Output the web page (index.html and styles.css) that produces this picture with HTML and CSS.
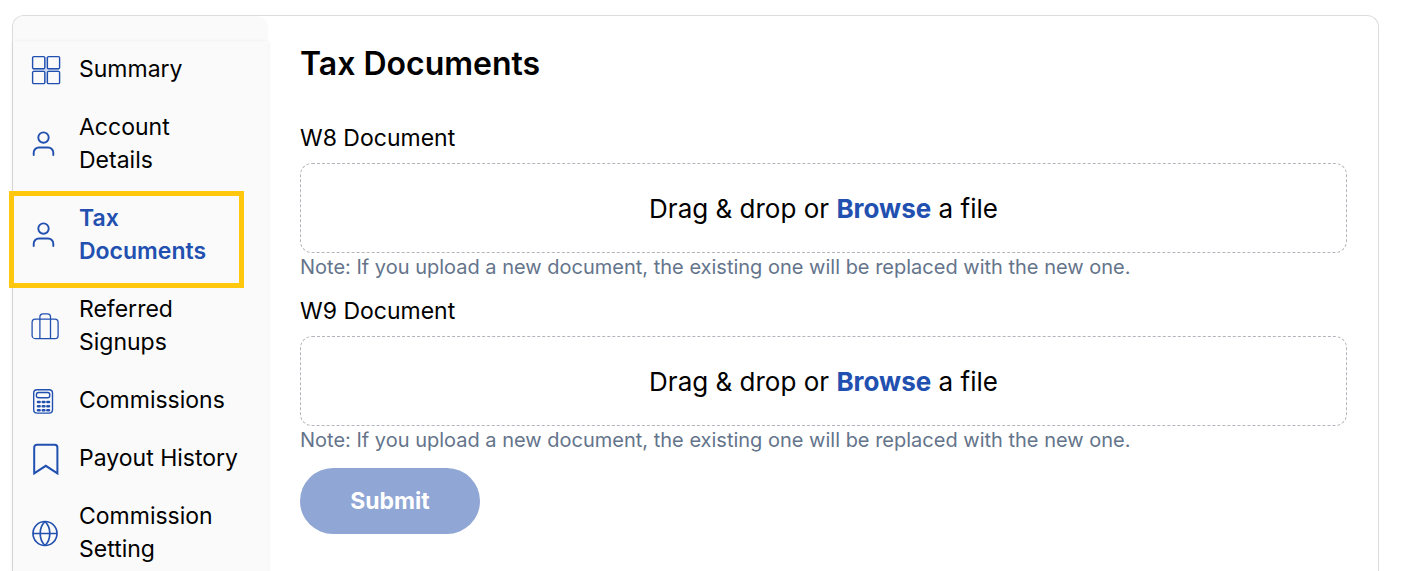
FILE: index.html
```html
<!DOCTYPE html>
<html lang="en">
<head>
<meta charset="utf-8">
<title>Tax Documents</title>
<link rel="stylesheet" href="styles.css">
</head>
<body>
<div class="card">
  <nav class="sidebar" aria-label="Account">
    <div class="menu">
      <a class="item" href="#">
        <svg class="icon" width="30" height="30" viewBox="0 0 30 30"><path d="M2 15.1h26M15.1 2v26" stroke="#cfd9ee" stroke-width="2"/><g fill="#fafafa" stroke="currentColor" stroke-width="1.4"><rect x="1.6" y="1.6" width="12.2" height="12.2" rx="1.2"/><rect x="16.4" y="1.6" width="12.2" height="12.2" rx="1.2"/><rect x="1.6" y="16.4" width="12.2" height="12.2" rx="1.2"/><rect x="16.4" y="16.4" width="12.2" height="12.2" rx="1.2"/></g></svg>
        <span>Summary</span>
      </a>
      <a class="item" href="#">
        <svg class="icon" width="30" height="30" viewBox="0 0 30 30"><g fill="none" stroke="currentColor" stroke-width="1.9" stroke-linecap="round"><circle cx="12.5" cy="8.6" r="5.2"/><path d="M2.7 26v-2.3a5.2 5.2 0 0 1 5.2-5.2h9.2a5.2 5.2 0 0 1 5.2 5.2V26"/></g></svg>
        <span>Account<br>Details</span>
      </a>
      <a class="item item-active" href="#" aria-current="page">
        <svg class="icon" width="30" height="30" viewBox="0 0 30 30"><g fill="none" stroke="currentColor" stroke-width="1.9" stroke-linecap="round"><circle cx="12.5" cy="8.6" r="5.2"/><path d="M2.7 26v-2.3a5.2 5.2 0 0 1 5.2-5.2h9.2a5.2 5.2 0 0 1 5.2 5.2V26"/></g></svg>
        <span>Tax<br>Documents</span>
      </a>
      <a class="item" href="#">
        <svg class="icon" width="30" height="30" viewBox="0 0 30 30"><g fill="none" stroke="currentColor" stroke-width="1.3"><rect x="1.1" y="8.2" width="26" height="19.4" rx="3.2"/><path d="M8.9 27.6V5.8a3 3 0 0 1 3-3h4.6a3 3 0 0 1 3 3v21.8"/></g></svg>
        <span>Referred<br>Signups</span>
      </a>
      <a class="item" href="#">
        <svg class="icon" width="30" height="30" viewBox="0 0 30 30"><g fill="none" stroke="currentColor" stroke-width="1.4"><rect x="2.7" y="3.7" width="18.8" height="23.4" rx="3.4"/><rect x="5.4" y="6.5" width="13.4" height="5.2" rx="2.2"/></g><path d="M7 16h1.6M11.8 16h1.6M16.4 16H18M7 20.2h1.6M11.8 20.2h1.6M16.4 20.2H18M7 24.2h1.6M11.8 24.2h1.6M16.4 24.2H18" fill="none" stroke="currentColor" stroke-width="2.6" stroke-linecap="round"/></svg>
        <span>Commissions</span>
      </a>
      <a class="item" href="#">
        <svg class="icon" width="30" height="32" viewBox="0 0 30 32"><path d="M3.2 30.4V4.4a2.6 2.6 0 0 1 2.6-2.6h18a2.6 2.6 0 0 1 2.6 2.6v26L14.8 22.8Z" fill="none" stroke="currentColor" stroke-width="2"/></svg>
        <span>Payout History</span>
      </a>
      <a class="item" href="#">
        <svg class="icon" width="30" height="30" viewBox="0 0 30 30"><g fill="none" stroke="currentColor" stroke-width="1.7"><circle cx="14" cy="15.5" r="12"/><path d="M2 15.5h24M14 3.5c-6.4 6.2-6.4 17.8 0 24M14 3.5c6.4 6.2 6.4 17.8 0 24"/></g></svg>
        <span>Commission<br>Setting</span>
      </a>
    </div>
  </nav>
  <main class="content">
    <h1 class="title">Tax Documents</h1>
    <form>
      <div class="field">
        <div class="label" id="w8">W8 Document</div>
        <div class="drop" role="group" aria-labelledby="w8">Drag &amp; drop or&nbsp;<button class="browse" type="button">Browse</button>&nbsp;a file</div>
        <p class="note">Note: If you upload a new document, the existing one will be replaced with the new one.</p>
      </div>
      <div class="field">
        <div class="label" id="w9">W9 Document</div>
        <div class="drop" role="group" aria-labelledby="w9">Drag &amp; drop or&nbsp;<button class="browse" type="button">Browse</button>&nbsp;a file</div>
        <p class="note">Note: If you upload a new document, the existing one will be replaced with the new one.</p>
      </div>
      <button class="submit" type="submit" disabled>Submit</button>
    </form>
  </main>
</div>
</body>
</html>
```
FILE: styles.css
```css
* { box-sizing: border-box; }
html, body { height: 100%; }
body {
  margin: 0;
  padding: 15px 24px 0 12px;
  overflow: hidden;
  background: #fff;
  color: #000;
  font-family: Inter, "Open Sans", sans-serif;
  font-size: 23px;
  line-height: 33px;
}
.card {
  display: flex;
  min-height: 100%;
  border: 1px solid #dcdcdc;
  border-bottom: 0;
  border-radius: 12px 12px 0 0;
}
.sidebar {
  flex: none;
  width: 255px;
  padding-top: 25px;
  background: #fafafa;
  border-radius: 12px 12px 0 0;
}
.menu {
  display: flex;
  flex-direction: column;
  gap: 25px;
  height: 100%;
  padding: 12px 24px 0 18px;
  background: #fafafa;
  box-shadow: 0 1px 4px rgba(0, 0, 0, 0.09);
}
.item {
  position: relative;
  display: flex;
  align-items: center;
  gap: 18px;
  color: #000;
  text-decoration: none;
  white-space: nowrap;
}
.icon {
  flex: none;
  color: #2250b0;
}
.item-active {
  color: #2250b0;
  font-weight: 600;
}
.item-active::after {
  content: "";
  position: absolute;
  inset: -11px 0 -20px -22px;
  border: 5px solid #ffc80f;
}
.content {
  flex: 1;
  padding: 24px 31px 38px 32px;
}
.title {
  margin: 0 0 34px;
  font-size: 32px;
  font-weight: 600;
  line-height: 48px;
}
.field { margin-bottom: 13px; }
.label { margin-bottom: 8px; }
.drop {
  display: flex;
  align-items: center;
  justify-content: center;
  height: 90px;
  border: 1px dashed #b4b4bc;
  border-radius: 12px;
  font-size: 26px;
}
.browse {
  padding: 0;
  border: 0;
  background: none;
  color: #2250b0;
  font: inherit;
  font-weight: 700;
}
.note {
  margin: 0;
  color: #64748b;
  font-size: 20px;
  line-height: 29px;
}
.submit {
  min-width: 180px;
  height: 66px;
  border: 0;
  border-radius: 33px;
  background: #90a6d5;
  color: #fff;
  font: inherit;
  font-weight: 700;
}
```
